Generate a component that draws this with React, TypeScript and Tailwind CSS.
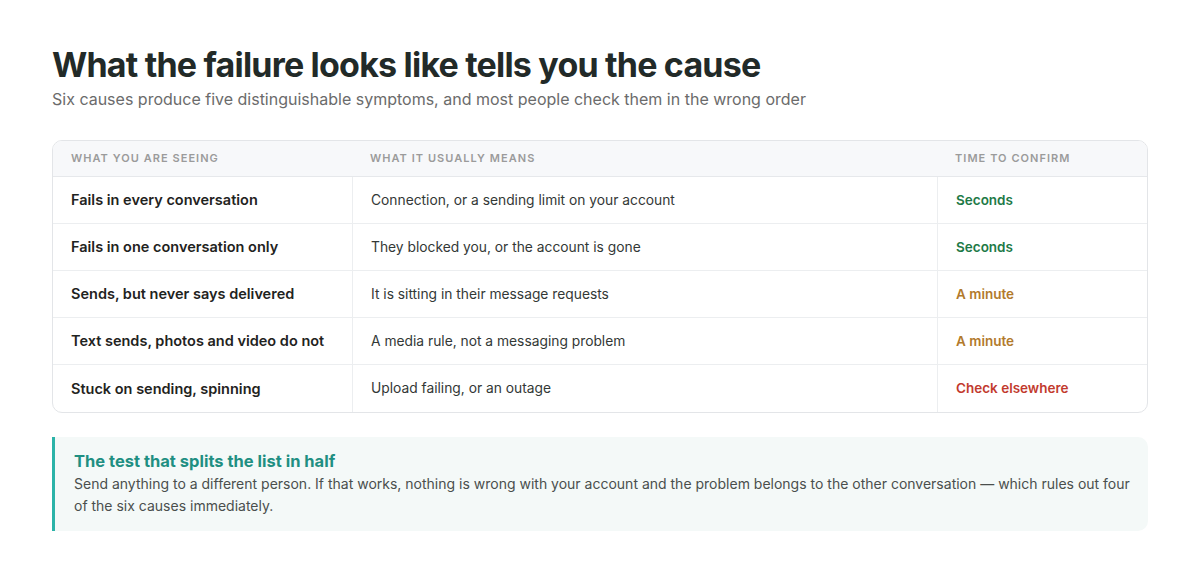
import React from "react";

type Row = {
  symptom: string;
  meaning: string;
  time: string;
  tone: "fast" | "mid" | "slow";
};

const rows: Row[] = [
  { symptom: "Fails in every conversation", meaning: "Connection, or a sending limit on your account", time: "Seconds", tone: "fast" },
  { symptom: "Fails in one conversation only", meaning: "They blocked you, or the account is gone", time: "Seconds", tone: "fast" },
  { symptom: "Sends, but never says delivered", meaning: "It is sitting in their message requests", time: "A minute", tone: "mid" },
  { symptom: "Text sends, photos and video do not", meaning: "A media rule, not a messaging problem", time: "A minute", tone: "mid" },
  { symptom: "Stuck on sending, spinning", meaning: "Upload failing, or an outage", time: "Check elsewhere", tone: "slow" },
];

const toneClass: Record<Row["tone"], string> = {
  fast: "text-[#1e7a47]",
  mid: "text-[#b27a2c]",
  slow: "text-[#c23a2e]",
};

const App: React.FC = () => {
  return (
    <div
      className="min-h-screen bg-white px-[52px] pt-[44px]"
      style={{ fontFamily: "Inter, 'Noto Sans', sans-serif" }}
    >
      <h1 className="text-[34px] font-bold leading-[42px] tracking-[-0.8px] text-[#222a28]">
        What the failure looks like tells you the cause
      </h1>
      <p className="mt-[1px] text-[16px] leading-[24px] text-[#6b6b6b]">
        Six causes produce five distinguishable symptoms, and most people check them in the wrong order
      </p>

      <div className="mt-[29px] w-[1096px] overflow-hidden rounded-[10px] border border-[#e3e5e8]">
        <div className="grid grid-cols-[299px_585px_1fr] h-[36px] items-center bg-[#f7f8fa] border-b border-[#e6e8eb] text-[11px] font-semibold uppercase tracking-[1.05px] text-[#9b9b9b]">
          <div className="px-[18px]">What you are seeing</div>
          <div className="px-[18px]">What it usually means</div>
          <div className="px-[18px]">Time to confirm</div>
        </div>
        {rows.map((r, i) => (
          <div
            key={i}
            className={`grid grid-cols-[299px_585px_1fr] h-[47px] ${i < rows.length - 1 ? "border-b border-[#eceef0]" : ""}`}
          >
            <div className="flex items-center px-[18px] text-[14.5px] font-semibold text-[#1f2321]">
              {r.symptom}
            </div>
            <div className="flex items-center border-l border-[#eceef0] px-[18px] text-[13.8px] text-[#333836]">
              {r.meaning}
            </div>
            <div className={`flex items-center border-l border-[#eceef0] px-[18px] text-[13.5px] font-semibold ${toneClass[r.tone]}`}>
              {r.time}
            </div>
          </div>
        ))}
      </div>

      <div className="mt-[24px] w-[1096px] rounded-r-[10px] border-l-[3px] border-[#2bb3a8] bg-[#f4f9f8] pl-[19px] pr-[10px] pt-[13px] pb-[14px]">
        <div className="text-[16.5px] font-bold leading-[22px] text-[#1f8f82]">
          The test that splits the list in half
        </div>
        <p className="mt-[1px] text-[14px] leading-[22px] text-[#4a4f4d]">
          Send anything to a different person. If that works, nothing is wrong with your account and the problem belongs to the other conversation — which rules out four of the six causes immediately.
        </p>
      </div>
    </div>
  );
};

export default App;
